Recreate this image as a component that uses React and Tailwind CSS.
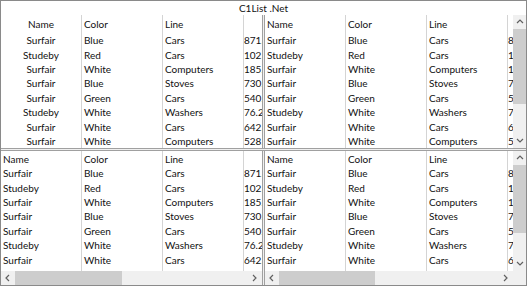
import React from "react";

const DATA = [
  ["Surfair", "Blue", "Cars", "871.99"],
  ["Studeby", "Red", "Cars", "1025.5"],
  ["Surfair", "White", "Computers", "185.25"],
  ["Surfair", "Blue", "Stoves", "730.50"],
  ["Surfair", "Green", "Cars", "540.75"],
  ["Studeby", "White", "Washers", "76.20"],
  ["Surfair", "White", "Cars", "642.10"],
  ["Surfair", "White", "Computers", "528.30"],
];

const Chev = ({ dir }) => {
  const pts = {
    up: "1,5 4,2 7,5",
    down: "1,2 4,5 7,2",
    left: "5,1 2,4 5,7",
    right: "2,1 5,4 2,7",
  }[dir];
  return (
    <svg width="8" height="8" viewBox="0 0 8 8" className="block">
      <polyline points={pts} fill="none" stroke="#606060" strokeWidth="1.2" />
    </svg>
  );
};

function VScroll({ thumbTop, thumbH }) {
  return (
    <div className="flex w-[13px] shrink-0 flex-col bg-[#f0f0f0]">
      <div className="flex h-[14px] shrink-0 items-center justify-center">
        <Chev dir="up" />
      </div>
      <div className="flex min-h-0 flex-1 flex-col">
        <div style={{ height: thumbTop }} className="shrink-0" />
        <div style={{ height: thumbH }} className="shrink-0 bg-[#cdcdcd]" />
      </div>
      <div className="flex h-[14px] shrink-0 items-center justify-center">
        <Chev dir="down" />
      </div>
    </div>
  );
}

function HScroll({ thumbLeft, thumbW, width }) {
  return (
    <div style={{ width }} className="flex h-[14px] shrink-0 bg-[#f0f0f0]">
      <div className="flex w-[14px] shrink-0 items-center justify-center">
        <Chev dir="left" />
      </div>
      <div className="flex min-w-0 flex-1">
        <div style={{ width: thumbLeft }} className="shrink-0" />
        <div style={{ width: thumbW }} className="shrink-0 bg-[#cdcdcd]" />
      </div>
      <div className="flex w-[14px] shrink-0 items-center justify-center">
        <Chev dir="right" />
      </div>
    </div>
  );
}

function Columns({ headerH, centerFirst, numW }) {
  const cols = [
    { title: "Name", idx: 0 },
    { title: "Color", idx: 1 },
    { title: "Line", idx: 2 },
  ];
  return (
    <div className="flex min-h-0 flex-1 overflow-hidden">
      {cols.map((c) => (
        <div
          key={c.title}
          className="flex w-[81px] shrink-0 flex-col border-r border-[#d4d4d4]"
        >
          <div
            style={{ height: headerH }}
            className={`flex shrink-0 items-center px-[2px] ${
              c.idx === 0 && centerFirst ? "justify-center" : ""
            }`}
          >
            {c.title}
          </div>
          {DATA.map((r, i) => (
            <div
              key={i}
              className={`flex h-[14.4px] shrink-0 items-center whitespace-nowrap px-[2px] ${
                c.idx === 0 && centerFirst ? "justify-center" : ""
              }`}
            >
              {r[c.idx]}
            </div>
          ))}
        </div>
      ))}
      <div style={{ width: numW }} className="flex shrink-0 flex-col overflow-hidden">
        <div style={{ height: headerH }} className="shrink-0" />
        {DATA.map((r, i) => (
          <div
            key={i}
            className="flex h-[14.4px] shrink-0 items-center whitespace-nowrap"
          >
            {r[3]}
          </div>
        ))}
      </div>
    </div>
  );
}

export default function App() {
  return (
    <div className="flex h-[286px] w-[527px] flex-col overflow-hidden border border-[#8a8a8a] bg-white text-[10px] leading-none text-[#111] font-['Lato','Liberation_Sans',sans-serif]">
      <div className="flex h-[14px] shrink-0 items-center justify-center">C1List .Net</div>

      {/* top panes */}
      <div className="flex h-[133px] shrink-0">
        <div className="flex w-[261px] shrink-0 overflow-hidden">
          <Columns headerH={18} centerFirst numW={19} />
        </div>
        <div className="w-[3px] shrink-0 border-x border-[#a0a0a0] bg-[#f0f0f0]" />
        <div className="flex w-[261px] shrink-0 overflow-hidden">
          <div className="flex w-[248px] shrink-0 overflow-hidden">
            <Columns headerH={18} numW={5} />
          </div>
          <VScroll thumbTop={0} thumbH={75} />
        </div>
      </div>

      <div className="h-[3px] shrink-0 border-y border-[#a0a0a0] bg-[#f0f0f0]" />

      {/* bottom panes */}
      <div className="flex min-h-0 flex-1">
        <div className="flex w-[261px] shrink-0 flex-col overflow-hidden">
          <Columns headerH={15} numW={19} />
          <HScroll thumbLeft={0} thumbW={107} width={261} />
        </div>
        <div className="w-[3px] shrink-0 border-x border-[#a0a0a0] bg-[#f0f0f0]" />
        <div className="flex w-[261px] shrink-0 flex-col overflow-hidden">
          <div className="flex min-h-0 flex-1">
            <div className="flex w-[248px] shrink-0 overflow-hidden">
              <Columns headerH={15} numW={5} />
            </div>
            <VScroll thumbTop={0} thumbH={68} />
          </div>
          <div className="flex shrink-0">
            <HScroll thumbLeft={0} thumbW={96} width={248} />
            <div className="h-[14px] w-[13px] shrink-0 bg-[#f0f0f0]" />
          </div>
        </div>
      </div>
    </div>
  );
}
